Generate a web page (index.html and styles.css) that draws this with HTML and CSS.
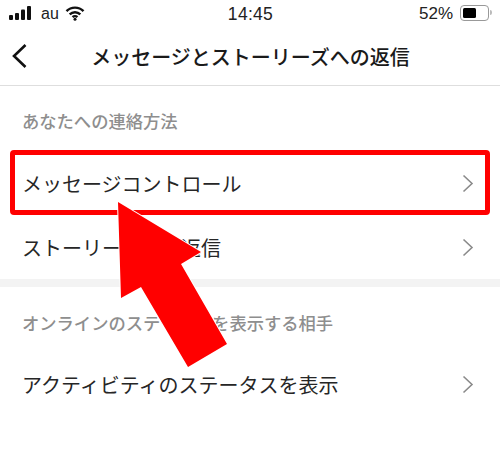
FILE: index.html
```html
<!DOCTYPE html>
<html>
    <head>
        <meta charset="utf-8">
        <title>メッセージとストーリーズへの返信</title>
        <link rel="stylesheet" href="styles.css">
    </head>
    <body>
        <div class="screen">
            <div class="status-bar">
                <div class="status-left">
                    <svg class="signal" width="22" height="14" viewBox="0 0 22 14">
                        <rect x="0" y="9" width="4" height="5" rx="1"/>
                        <rect x="6" y="7" width="4" height="7" rx="1"/>
                        <rect x="12" y="3.5" width="4" height="10.5" rx="1"/>
                        <rect x="18" y="0" width="4" height="14" rx="1"/>
                    </svg>
                    <span class="carrier">au</span>
                    <svg class="wifi" width="20" height="15" viewBox="0 0 20 15">
                        <path d="M1.5 5.2a12 12 0 0 1 17 0" />
                        <path d="M4.7 8.4a7.5 7.5 0 0 1 10.6 0" />
                        <path d="M7.6 11.2a3.4 3.4 0 0 1 4.8 0" />
                        <circle cx="10" cy="13.2" r="1.5"/>
                    </svg>
                </div>
                <div class="status-time">14:45</div>
                <div class="status-right">
                    <span>52%</span>
                    <div class="battery"><div class="battery-level"></div></div>
                    <div class="battery-tip"></div>
                </div>
            </div>

            <div class="nav-bar">
                <svg class="back" width="18" height="26" viewBox="0 0 18 26">
                    <path d="M14.5 2 L3 13 L14.5 24"/>
                </svg>
                <h1>メッセージとストーリーズへの返信</h1>
            </div>

            <div class="section">
                <div class="section-title">あなたへの連絡方法</div>
                <div class="row row-first">
                    <span>メッセージコントロール</span>
                    <svg class="chevron" width="12" height="19" viewBox="0 0 12 19"><path d="M1.5 1.5 L10 9.5 L1.5 17.5"/></svg>
                </div>
                <div class="row">
                    <span>ストーリーズへの返信</span>
                    <svg class="chevron" width="12" height="19" viewBox="0 0 12 19"><path d="M1.5 1.5 L10 9.5 L1.5 17.5"/></svg>
                </div>
            </div>

            <div class="divider"></div>

            <div class="section">
                <div class="section-title">オンラインのステータスを表示する相手</div>
                <div class="row row-last">
                    <span>アクティビティのステータスを表示</span>
                    <svg class="chevron" width="12" height="19" viewBox="0 0 12 19"><path d="M1.5 1.5 L10 9.5 L1.5 17.5"/></svg>
                </div>
            </div>

            <div class="highlight"></div>
            <svg class="arrow" width="500" height="454" viewBox="0 0 500 454">
                <polygon points="118,202 201,252 181,264 227,344 188,367 141,287 121,298"/>
            </svg>
        </div>
    </body>
</html>
```

FILE: styles.css
```css
*{
    box-sizing: border-box;
}
html,body{
    margin:0;
    padding:0;
    background:#fff;
}
.screen{
    position: relative;
    width:500px;
    height:454px;
    overflow: hidden;
    font-family: "Noto Sans CJK JP","Liberation Sans",sans-serif;
    color:#262626;
}

.status-bar{
    display:grid;
    grid-template-columns: 1fr auto 1fr;
    align-items: center;
    height:28px;
    padding:0 8px 0 9px;
    font-family: "Liberation Sans",sans-serif;
    font-size:17px;
    color:#222;
}
.status-left{
    display:flex;
    align-items: center;
}
.signal{
    fill:#111;
    margin-right:10px;
    margin-top:-2px;
}
.carrier{
    font-size:16px;
    margin-right:6px;
}
.wifi{
    fill:#111;
    margin-top:-1px;
}
.wifi path{
    fill:none;
    stroke:#111;
    stroke-width:2.4;
}
.status-time{
    font-size:17.5px;
    letter-spacing: 0.3px;
}
.status-right{
    display:flex;
    align-items: center;
    justify-content: flex-end;
}
.battery{
    width:29px;
    height:16px;
    margin-left:7px;
    margin-top:-3px;
    border:1px solid #999;
    border-radius:4px;
    padding:2px;
}
.battery-level{
    width:13px;
    height:100%;
    background:#000;
    border-radius:1.5px;
}
.battery-tip{
    width:2px;
    height:5px;
    margin-left:1px;
    margin-top:-3px;
    background:#bbb;
    border-radius:0 2px 2px 0;
}

.nav-bar{
    position: relative;
    display:flex;
    align-items: center;
    justify-content: center;
    height:58px;
    border-bottom:1px solid #dedede;
    padding-left:1px;
}
.nav-bar h1{
    margin:0;
    font-size:20px;
    font-weight:500;
    color:#1a1a1a;
}
.back{
    position:absolute;
    left:11px;
    top:15px;
    fill:none;
    stroke:#111;
    stroke-width:2.6;
}

.section-title{
    margin-top:24px;
    padding:0 22px;
    font-size:17.3px;
    font-weight:500;
    line-height:22px;
    color:#8e8e8e;
}
.row{
    display:flex;
    align-items: center;
    justify-content: space-between;
    height:64px;
    padding:0 26px 0 22px;
    font-size:20px;
    color:#262626;
}
.row-first{
    margin-top:19px;
}
.row-last{
    margin-top:18px;
}
.chevron{
    fill:none;
    stroke:#8a8a8a;
    stroke-width:1.6;
}
.divider{
    height:8px;
    background:#f3f3f3;
}
.divider + .section .section-title{
    margin-top:25px;
}

.highlight{
    position:absolute;
    left:10px;
    top:150px;
    width:480px;
    height:65px;
    border:5px solid #f00;
    border-radius:4px;
}
.arrow{
    position:absolute;
    left:0;
    top:0;
}
.arrow polygon{
    fill:#f00;
    stroke:#fff;
    stroke-width:2;
    paint-order: stroke;
}
```
